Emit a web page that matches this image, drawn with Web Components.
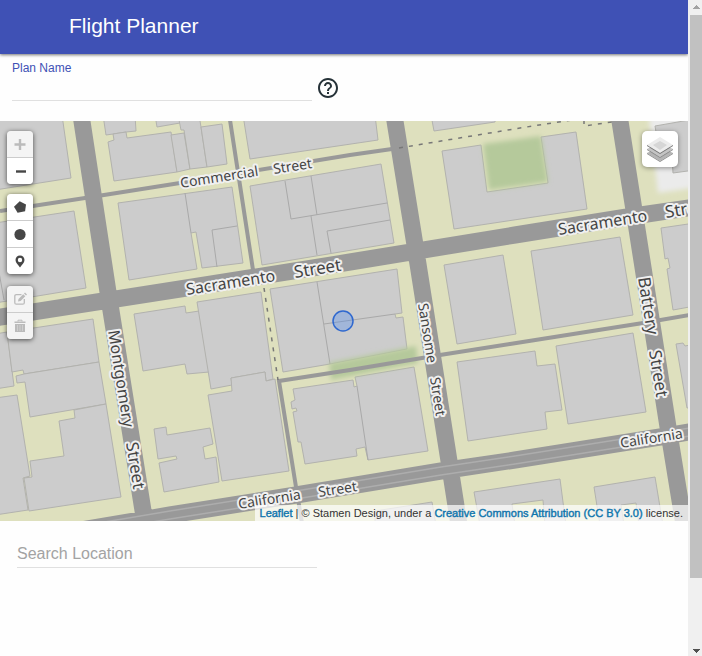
<!DOCTYPE html>
<html lang="en">
<head>
<meta charset="utf-8">
<meta name="viewport" content="width=device-width, initial-scale=1">
<title>Flight Planner</title>
<style>
html, body { margin: 0; height: 100%; }
body { font-family: "Liberation Sans", Arial, sans-serif; background: #fefefe; color: #333; overflow: hidden; }
</style>
</head>
<body>
<planner-app></planner-app>
<script>
const define = (name, html, setup) => customElements.define(name, class extends HTMLElement {
  constructor() {
    super();
    this.attachShadow({ mode: "open" }).innerHTML = html;
  }
  connectedCallback() { if (setup) setup(this, this.shadowRoot); }
});

define("app-bar", `
<style>
:host { display: flex; align-items: center; height: 54px; padding: 0 16px 2px 69px; box-sizing: border-box; background: #3f51b5; color: #fff; box-shadow: 0 1px 3px rgba(0,0,0,.55); position: relative; }
h1 { margin: 0; font-size: 21px; line-height: 26px; font-weight: 400; }
</style>
<h1><slot></slot></h1>`);

define("plan-field", `
<style>
:host { display: flex; align-items: flex-start; gap: 5px; padding: 7px 12px 20px; }
.field { display: flex; flex-direction: column; width: 300px; }
label { font-size: 12px; line-height: 14px; color: #3f51b5; }
input { border: 0; border-bottom: 1px solid #e0e0e0; background: none; padding: 0; height: 26px; box-sizing: border-box; font: 16px/24px "Liberation Sans", Arial, sans-serif; outline: none; }
button { border: 0; background: none; padding: 0; width: 22px; height: 22px; margin-top: 16px; }
svg { display: block; }
</style>
<div class="field"><label for="plan">Plan Name</label><input id="plan" type="text"></div>
<button type="button" aria-label="Help"><svg width="22" height="22" viewBox="1 1 22 22"><path fill="#263238" d="M11 18h2v-2h-2v2zm1-16C6.480 2 2 6.480 2 12s4.480 10 10 10 10-4.480 10-10S17.520 2 12 2zm0 18c-4.410 0-8-3.590-8-8s3.590-8 8-8 8 3.590 8 8-3.590 8-8 8zm0-14c-2.210 0-4 1.790-4 4h2c0-1.100.9-2 2-2s2 .9 2 2c0 2-3 1.750-3 5h2c0-2.250 3-2.500 3-5 0-2.210-1.790-4-4-4z"/></svg></button>`);

define("location-search", `
<style>
:host { display: block; padding: 20px 17px; }
input { display: block; width: 300px; max-width: 100%; height: 27px; box-sizing: border-box; padding: 0; border: 0; border-bottom: 1px solid #e0e0e0; background: none; font: 16px/24px "Liberation Sans", Arial, sans-serif; outline: none; }
input::placeholder { color: #a3a3a3; opacity: 1; }
</style>
<input type="text" placeholder="Search Location" aria-label="Search Location">`);

define("tool-bar", `
<style>
:host { display: flex; flex-direction: column; width: 26px; border-radius: 4px; box-shadow: 0 1px 5px rgba(0,0,0,.65); }
</style>
<slot></slot>`);

const ICONS = {
  plus: '<path d="M13 8v11M7.500 13.500h11" stroke="currentColor" stroke-width="2.400"/>',
  minus: '<path d="M9 13.500h10" stroke="currentColor" stroke-width="2.400"/>',
  polygon: '<path fill="currentColor" d="M12.700 7.300l6.300 3.200-.9 6.800-7.500 1.500-3.600-6z"/>',
  circle: '<circle cx="13" cy="13.500" r="5.600" fill="currentColor"/>',
  marker: '<path fill="currentColor" fill-rule="evenodd" d="M13 7.500c-2.700 0-4.500 2-4.500 4.500 0 2.900 2.600 4.500 4.500 7.500 1.900-3 4.500-4.600 4.500-7.500 0-2.500-1.800-4.500-4.500-4.500zm0 2.300a2.200 2.200 0 110 4.400 2.200 2.200 0 010-4.400z"/>',
  edit: '<path d="M14.500 8.700H9.300Q7.800 8.700 7.800 10.200v6.500q0 1.500 1.500 1.500h6.500q1.500 0 1.500-1.500V13" fill="none" stroke="currentColor" stroke-width="1.300"/><path fill="currentColor" d="M11 15.500l.5-2.600 4.700-4.700 2.100 2.100-4.700 4.700zM17 7.400l1-1 2 2-1 1z"/>',
  trash: '<path fill="currentColor" d="M8 11h10v8H8zM7.500 8.600h11v1.300h-11z"/><path d="M11 8.500V7.200h4v1.300" fill="none" stroke="currentColor"/><path d="M10.500 12v6M13 12v6M15.500 12v6" stroke="#ddd" stroke-width=".6"/>'
};
define("tool-button", `
<style>
:host { display: block; border-bottom: 1px solid #ccc; background: #fff; }
:host(:first-child) { border-radius: 4px 4px 0 0; }
:host(:last-child) { border-bottom: 0; border-radius: 0 0 4px 4px; }
:host([off]) { background: #f4f4f4; }
button { display: block; width: 26px; height: 26px; border: 0; padding: 0; background: none; color: #464646; }
button:disabled { color: #bbb; }
svg { display: block; }
</style>
<button type="button"><svg width="26" height="26" viewBox="0 0 26 26"></svg></button>`, (host, root) => {
  root.querySelector("svg").innerHTML = ICONS[host.getAttribute("icon")];
  const b = root.querySelector("button");
  b.setAttribute("aria-label", host.getAttribute("name"));
  b.disabled = host.hasAttribute("off");
});

const BUILDINGS = [
 "-5,115 62,115 71,178 33,184 -5,190", "-5,223 74,211 86,288 -5,303",
 "103,115 106,135 113,134 126,132 136,131 135,115",
 "108,142 114,140 113,134 126,132 127,138 171,132 177,172 114,181",
 "155,115 157,127 180,123 178,115", "171,135 184,133 190,169 177,172",
 "178,115 181,130 184,130 190,169 207,167 201,127 199,115", "201,127 222,124 227,164 207,167",
 "243,115 250,159 378,140 375,115",
 "118,203 232,187 243,263 202,268 196,232 191,233 197,269 129,280",
 "250,186 381,164 394,243 262,265", "431,115 434,131 495,122 496,115",
 "442,151 481,145 487,192 548,183 541,137 576,132 587,209 454,229",
 "655,126 695,119 695,170 673,173 671,140 658,144",
 "661,228 695,223 695,306 673,310 667,269 670,268 668,258 665,259",
 "531,251 620,237 633,315 543,330", "444,265 503,255 516,334 457,344",
 "-5,334 7,332 14,386 -5,389", "7,332 93,319 99,362 24,374 23,370 12,372",
 "24,374 99,362 106,404 30,417 25,382 17,383 16,376",
 "106,404 121,497 29,511 24,478 32,477 30,461 64,456 59,421 75,418 74,410",
 "-5,398 17,395 30,476 23,478 28,510 -5,515",
 "134,314 185,306 186,313 199,311 209,372 187,374 185,364 143,371",
 "197,302 261,292 273,379 266,381 265,372 231,378 232,385 211,389",
 "231,378 265,372 266,381 275,379 289,471 222,481 208,395 232,391",
 "154,429 166,427 167,435 210,428 213,444 203,447 205,459 216,457 219,482 164,492 159,463 177,459 176,456 158,459",
 "270,289 397,269 402,313 395,314 396,318 403,317 407,349 330,364 283,372",
 "293,389 353,380 354,387 357,386 355,377 414,367 428,451 368,460 365,447 356,449 357,456 305,464 301,442 298,442 293,412 297,411 296,408 292,409 291,402 295,400",
 "457,362 535,351 537,366 555,364 562,410 545,412 547,429 468,441",
 "556,346 633,333 646,412 568,424", "676,344 683,343 685,346 695,344 695,407 687,408",
 "474,492 560,479 566,525 545,525 543,500 512,504 515,525 480,525",
 "594,487 655,477 663,525 639,525 636,503 621,505 624,525 600,525",
 "375,511 432,502 436,525 375,525"
];
const WALLS = "M-1 272l5 28M185 193l6 40M237 226l-25 4 5 37M285 181l6 38L387 203M311 176l6 39M311 216l6 39M331 253l-4-22L390 220M317 282l13 82M324 324l71-10M357 386l11 74";
/* x, y, rotation, size, text */
const LABELS = [
 [181,188,-9,14,"Commercial"], [274,174,-9,14,"Street"],
 [187,295,-9,16,"Sacramento"], [295,278,-9,17,"Street"],
 [559,235,-9,16,"Sacramento"], [666,218,-9,17,"Street"],
 [108,331,81,16,"Montgomery"], [126,443,81,17,"Street"],
 [418,304,81,14,"Sansome"], [430,378,81,14,"Street"],
 [638,278,81,17,"Battery"], [649,351,81,17,"Street"],
 [239,509,-9,14,"California"], [319,497,-9,14,"Street"], [621,448,-9,14,"California"]
];
define("street-map", `
<style>
:host { display: block; position: relative; height: 400px; overflow: hidden; background: #dee0be; }
.canvas { display: block; width: 100%; height: 100%; }
.b { fill: #ccc; stroke: #b2b2ae; }
.road { fill: none; stroke: #999; }
.dash { fill: none; stroke: #777; stroke-width: 1.500; stroke-dasharray: 4 6; }
text { font-family: "Liberation Sans Narrow", "Noto Sans", sans-serif; fill: #444; stroke: #f0f0f0; stroke-width: 4px; stroke-linejoin: round; paint-order: stroke; }
.tools { position: absolute; left: 7px; top: 10px; display: flex; flex-direction: column; gap: 10px; }
.edit { margin-top: 2px; }
.layers { position: absolute; right: 10px; top: 10px; width: 36px; height: 36px; padding: 0; border: 0; border-radius: 5px; background: #fff; box-shadow: 0 1px 5px rgba(0,0,0,.4); }
.layers svg { display: block; }
.credit { position: absolute; right: 0; bottom: 0; padding: 0 5px; font-size: 11px; line-height: 16px; background: rgba(255,255,255,.7); white-space: nowrap; }
a { color: #0078a8; text-decoration: none; -webkit-text-stroke: .4px #1a74b0; }
</style>
<svg class="canvas" viewBox="0 121 688 400" preserveAspectRatio="xMidYMid slice" role="img" aria-label="Street map">
<defs><filter id="soft" x="-20%" y="-20%" width="140%" height="140%"><feGaussianBlur stdDeviation="2.500"/></filter></defs>
<polygon points="648,110 700,110 700,187 658,193" fill="#ebebeb" filter="url(#soft)"/>
<g id="buildings"></g>
<path d="${WALLS}" fill="none" stroke="#a9a9a9"/>
<polygon points="483,144 541,136 548,182 489,190" fill="#b5c99b" filter="url(#soft)"/>
<polygon points="329,363 416,346 418,363 331,380" fill="#b5c99b" filter="url(#soft)"/>
<g class="road">
<path stroke-width="4" d="M0 211L85 198 180 183 350 155 392 149M230 120L253 270M302 523L296 487 279 381 350 370 440 355 510 344 643 323 690 315"/>
<path stroke-width="17" d="M81 115L108 292 145 523M394 115L415 245 449 461 459 525M619 115L634 210 668 427 684 525M-5 318L180 289 350 262 515 235 627 217 695 207M75 531L170 515 296 495 441 471 515 460 660 437 695 431"/>
<path stroke="#adadad" stroke-width="1.500" d="M75 527L170 511 296 491 441 467 515 456 660 433 695 427M75 535L170 519 296 499 441 475 515 464 660 441 695 435"/>
</g>
<path class="dash" d="M399 148L520 128 572 120M584 120v6L612 122M264 288L278 380"/>
<circle cx="343" cy="321" r="10" fill="#3f83f8" fill-opacity=".3" stroke="#2f68cf" stroke-width="1.500"/>
<g id="labels"></g>
</svg>
<div class="tools">
<tool-bar><tool-button icon="plus" name="Zoom in" off></tool-button><tool-button icon="minus" name="Zoom out"></tool-button></tool-bar>
<tool-bar><tool-button icon="polygon" name="Draw a polygon"></tool-button><tool-button icon="circle" name="Draw a circle"></tool-button><tool-button icon="marker" name="Draw a marker"></tool-button></tool-bar>
<tool-bar class="edit"><tool-button icon="edit" name="Edit layers" off></tool-button><tool-button icon="trash" name="Delete layers" off></tool-button></tool-bar>
</div>
<button class="layers" type="button" aria-label="Layers"><svg width="36" height="36" viewBox="0 0 36 36"><path fill="#b5b5b5" d="M5 22l13 8 13-8-4-2-9 6-9-6z"/><path fill="#8c8c8c" d="M5 22v1l13 8 13-8v-1l-13 8z"/><path fill="#c4c4c4" d="M5 18l13 8 13-8-4-2-9 6-9-6z"/><path fill="#8c8c8c" d="M5 18v1l13 8 13-8v-1l-13 8z"/><path fill="#ececec" d="M5 14l13-8 13 8-13 8z"/><path fill="#d6d6d6" d="M11 14l7-4 7 4-7 5z"/><path fill="#777" d="M5 14v1l13 8 13-8v-1l-13 8z"/></svg></button>
<div class="credit"><a href="#leaflet">Leaflet</a> | © Stamen Design, under a <a href="#license">Creative Commons Attribution (CC BY 3.0)</a> license.</div>`, (host, root) => {
  root.getElementById("buildings").innerHTML = BUILDINGS.map(p => `<polygon class="b" points="${p}"/>`).join("");
  root.getElementById("labels").innerHTML = LABELS.map(([x, y, r, s, t]) => `<text transform="translate(${x} ${y}) rotate(${r})" font-size="${s}">${t}</text>`).join("");
});

define("scroll-rail", `
<style>
:host { display: grid; grid-template-rows: 15px 1fr 15px; width: 14px; background: #f0f0f0; }
.track { padding-left: 2px; }
.thumb { height: 90%; background: #c1c1c1; }
svg { display: block; width: 14px; height: 15px; }
</style>
<svg viewBox="0 0 14 15" shape-rendering="crispEdges"><path d="M5 9l3.500-4L12 9z" fill="#a3a3a3"/></svg>
<div class="track"><div class="thumb"></div></div>
<svg viewBox="0 0 14 15" shape-rendering="crispEdges"><path d="M5 8h7l-3.500 4z" fill="#505050"/></svg>`);

define("planner-app", `
<style>
:host { display: grid; grid-template-columns: 1fr auto; height: 100vh; }
main { min-width: 0; overflow: hidden; }
</style>
<main><app-bar>Flight Planner</app-bar><plan-field></plan-field><street-map></street-map><location-search></location-search></main>
<scroll-rail></scroll-rail>`);
</script>
</body>
</html>
